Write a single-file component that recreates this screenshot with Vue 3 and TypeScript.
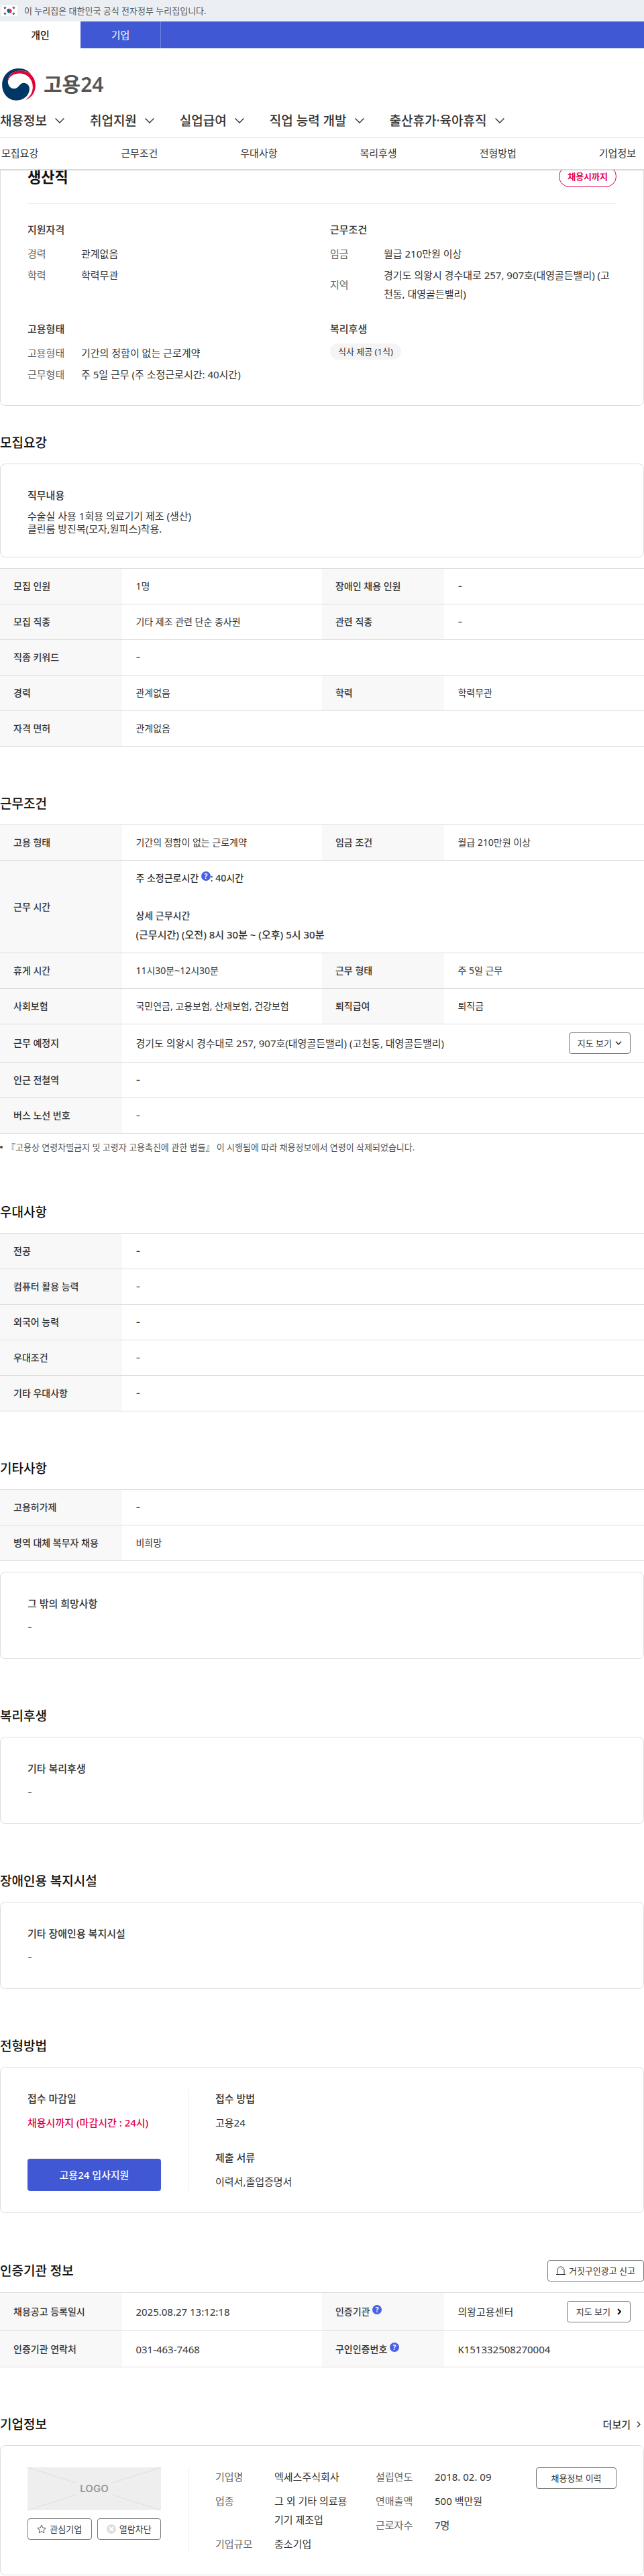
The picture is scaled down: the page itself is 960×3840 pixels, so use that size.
<script setup lang="ts">
interface Cell {
  label: string
  value: string
  help?: boolean
  button?: 'down' | 'right'
}
interface Pair {
  label: string
  value: string
}

const mainMenu: string[] = ['채용정보', '취업지원', '실업급여', '직업 능력 개발', '출산휴가·육아휴직']
const anchors: string[] = ['모집요강', '근무조건', '우대사항', '복리후생', '전형방법', '기업정보']

const qualification: Pair[] = [
  { label: '경력', value: '관계없음' },
  { label: '학력', value: '학력무관' },
]
const condition: Pair[] = [
  { label: '임금', value: '월급 210만원 이상' },
  { label: '지역', value: '경기도 의왕시 경수대로 257, 907호(대영골든밸리) (고천동, 대영골든밸리)' },
]
const employment: Pair[] = [
  { label: '고용형태', value: '기간의 정함이 없는 근로계약' },
  { label: '근무형태', value: '주 5일 근무 (주 소정근로시간: 40시간)' },
]

const recruitRows: Cell[][] = [
  [{ label: '모집 인원', value: '1명' }, { label: '장애인 채용 인원', value: '-' }],
  [{ label: '모집 직종', value: '기타 제조 관련 단순 종사원' }, { label: '관련 직종', value: '-' }],
  [{ label: '직종 키워드', value: '-' }],
  [{ label: '경력', value: '관계없음' }, { label: '학력', value: '학력무관' }],
  [{ label: '자격 면허', value: '관계없음' }],
]
const preferRows: Pair[] = [
  { label: '전공', value: '-' },
  { label: '컴퓨터 활용 능력', value: '-' },
  { label: '외국어 능력', value: '-' },
  { label: '우대조건', value: '-' },
  { label: '기타 우대사항', value: '-' },
]
const otherRows: Pair[] = [
  { label: '고용허가제', value: '-' },
  { label: '병역 대체 복무자 채용', value: '비희망' },
]
const certRows: Cell[][] = [
  [
    { label: '채용공고 등록일시', value: '2025.08.27 13:12:18' },
    { label: '인증기관', value: '의왕고용센터', help: true, button: 'right' },
  ],
  [
    { label: '인증기관 연락처', value: '031-463-7468' },
    { label: '구인인증번호', value: 'K151332508270004', help: true },
  ],
]
const companyLeft: Pair[] = [
  { label: '기업명', value: '엑세스주식회사' },
  { label: '업종', value: '그 외 기타 의료용 기기 제조업' },
  { label: '기업규모', value: '중소기업' },
]
const companyRight: Pair[] = [
  { label: '설립연도', value: '2018. 02. 09' },
  { label: '연매출액', value: '500 백만원' },
  { label: '근로자수', value: '7명' },
]

const isEmpty = (value: string): boolean => value === '-'
</script>

<template>
  <div class="page">
    <header class="header">
      <div class="gov">
        <svg class="flag" viewBox="0 0 24 16" aria-hidden="true">
          <rect width="24" height="16" fill="#fff" />
          <path d="M8.6 6.2a4 4 0 0 1 6.8 3.9A2 2 0 0 1 12 8a2 2 0 0 0-3.4-1.8z" fill="#d6313b" />
          <path d="M8.6 6.2A2 2 0 0 1 12 8a2 2 0 0 0 3.4 2.1 4 4 0 0 1-6.8-3.9z" fill="#1d4f9e" />
          <g stroke="#333" stroke-width="3" stroke-dasharray="1 .4">
            <path d="M4.4 4.8 6.6 2.4M17.4 2.4l2.2 2.4M4.4 11.2l2.2 2.4M17.4 13.6l2.2-2.4" />
          </g>
        </svg>
        <span>이 누리집은 대한민국 공식 전자정부 누리집입니다.</span>
      </div>
      <div class="tabs">
        <a href="#" class="tab on">개인</a>
        <a href="#" class="tab">기업</a>
      </div>
      <a href="#" class="brand">
        <svg class="emblem" viewBox="9 305 150 145" aria-hidden="true">
          <path d="M9 379C9 336 42 305 84 305c24 0 44 10 57 28-14-12-30-18-50-18-33 0-56 20-56 48 0 20 12 33 29 33 20 0 22-25 43-25 15 0 25 12 25 26 0 29-26 52-59 52C36 449 9 418 9 379z" fill="#003764" />
          <path d="M35 367c-1-30 21-52 56-52 39 0 68 28 68 66 0 32-18 56-45 66 21-14 33-35 33-58 0-35-26-61-60-61-28 0-49 15-52 39z" fill="#e60033" />
        </svg>
        <span>고용24</span>
      </a>
      <nav class="menu">
        <button v-for="m in mainMenu" :key="m" type="button">
          {{ m }}
          <svg viewBox="0 0 14 8" aria-hidden="true"><path d="M.6.6 7 7 13.4.6" /></svg>
        </button>
      </nav>
      <nav class="anchors">
        <a v-for="a in anchors" :key="a" href="#">{{ a }}</a>
      </nav>
    </header>

    <main>
      <section class="card summary">
        <div class="summary-head">
          <h1>생산직</h1>
          <span class="due">채용시까지</span>
        </div>
        <div class="summary-grid">
          <div>
            <h3>지원자격</h3>
            <dl class="pairs">
              <div v-for="p in qualification" :key="p.label"><dt>{{ p.label }}</dt><dd>{{ p.value }}</dd></div>
            </dl>
          </div>
          <div>
            <h3>근무조건</h3>
            <dl class="pairs">
              <div v-for="p in condition" :key="p.label"><dt>{{ p.label }}</dt><dd>{{ p.value }}</dd></div>
            </dl>
          </div>
          <div>
            <h3>고용형태</h3>
            <dl class="pairs">
              <div v-for="p in employment" :key="p.label"><dt>{{ p.label }}</dt><dd>{{ p.value }}</dd></div>
            </dl>
          </div>
          <div>
            <h3>복리후생</h3>
            <span class="chip">식사 제공 (1식)</span>
          </div>
        </div>
      </section>

      <section class="block first">
        <div class="head"><h2>모집요강</h2></div>
        <div class="card">
          <h3>직무내용</h3>
          <p class="tight">수술실 사용 1회용 의료기기 제조 (생산)<br>클린룸 방진복(모자,원피스)착용.</p>
        </div>
        <table class="after-card">
          <colgroup><col class="c-th"><col class="c-td"><col class="c-th"><col class="c-td"></colgroup>
          <tbody>
            <tr v-for="(row, i) in recruitRows" :key="i">
              <template v-for="c in row" :key="c.label">
                <th scope="row">{{ c.label }}</th>
                <td :colspan="row.length === 1 ? 3 : 1" :class="{ empty: isEmpty(c.value) }">{{ c.value }}</td>
              </template>
            </tr>
          </tbody>
        </table>
      </section>

      <section class="block">
        <div class="head"><h2>근무조건</h2></div>
        <table>
          <colgroup><col class="c-th"><col class="c-td"><col class="c-th"><col class="c-td"></colgroup>
          <tbody>
            <tr>
              <th scope="row">고용 형태</th><td>기간의 정함이 없는 근로계약</td>
              <th scope="row">임금 조건</th><td>월급 210만원 이상</td>
            </tr>
            <tr>
              <th scope="row">근무 시간</th>
              <td colspan="3" class="hours">
                <p>주 소정근로시간 <button type="button" class="help" aria-label="도움말">?</button>: 40시간</p>
                <p class="gap">상세 근무시간</p>
                <p class="large">(근무시간) (오전) 8시 30분 ~ (오후) 5시 30분</p>
              </td>
            </tr>
            <tr>
              <th scope="row">휴게 시간</th><td>11시30분~12시30분</td>
              <th scope="row">근무 형태</th><td>주 5일 근무</td>
            </tr>
            <tr>
              <th scope="row">사회보험</th><td>국민연금, 고용보험, 산재보험, 건강보험</td>
              <th scope="row">퇴직급여</th><td>퇴직금</td>
            </tr>
            <tr>
              <th scope="row">근무 예정지</th>
              <td colspan="3">
                <div class="split">
                  <span class="large">경기도 의왕시 경수대로 257, 907호(대영골든밸리) (고천동, 대영골든밸리)</span>
                  <button type="button" class="btn">지도 보기<svg class="i-down" viewBox="0 0 10 8" aria-hidden="true"><path d="M1 1.5 5 6l4-4.5" /></svg></button>
                </div>
              </td>
            </tr>
            <tr><th scope="row">인근 전철역</th><td colspan="3" class="empty">-</td></tr>
            <tr><th scope="row">버스 노선 번호</th><td colspan="3" class="empty">-</td></tr>
          </tbody>
        </table>
        <p class="note">『고용상 연령차별금지 및 고령자 고용촉진에 관한 법률』 이 시행됨에 따라 채용정보에서 연령이 삭제되었습니다.</p>
      </section>

      <section class="block">
        <div class="head"><h2>우대사항</h2></div>
        <table>
          <colgroup><col class="c-th"><col></colgroup>
          <tbody>
            <tr v-for="r in preferRows" :key="r.label">
              <th scope="row">{{ r.label }}</th>
              <td :class="{ empty: isEmpty(r.value) }">{{ r.value }}</td>
            </tr>
          </tbody>
        </table>
      </section>

      <section class="block">
        <div class="head"><h2>기타사항</h2></div>
        <table>
          <colgroup><col class="c-th"><col></colgroup>
          <tbody>
            <tr v-for="r in otherRows" :key="r.label">
              <th scope="row">{{ r.label }}</th>
              <td :class="{ empty: isEmpty(r.value) }">{{ r.value }}</td>
            </tr>
          </tbody>
        </table>
        <div class="card after-table">
          <h3>그 밖의 희망사항</h3>
          <p class="empty">-</p>
        </div>
      </section>

      <section class="block">
        <div class="head"><h2>복리후생</h2></div>
        <div class="card">
          <h3>기타 복리후생</h3>
          <p class="empty">-</p>
        </div>
      </section>

      <section class="block">
        <div class="head"><h2>장애인용 복지시설</h2></div>
        <div class="card">
          <h3>기타 장애인용 복지시설</h3>
          <p class="empty">-</p>
        </div>
      </section>

      <section class="block">
        <div class="head"><h2>전형방법</h2></div>
        <div class="card columns">
          <div class="side apply">
            <div>
              <h3>접수 마감일</h3>
              <p class="deadline">채용시까지 (마감시간 : 24시)</p>
            </div>
            <button type="button" class="primary">고용24 입사지원</button>
          </div>
          <div class="method">
            <div>
              <h3>접수 방법</h3>
              <p>고용24</p>
            </div>
            <div>
              <h3>제출 서류</h3>
              <p>이력서,졸업증명서</p>
            </div>
          </div>
        </div>
      </section>

      <section class="block">
        <div class="head">
          <h2>인증기관 정보</h2>
          <button type="button" class="btn">
            <svg class="i-siren" viewBox="0 0 14 14" aria-hidden="true"><path d="M0 12.5h14M2 12V6a5 5 0 0 1 10 0v6M8 3.5l1.8 1.8" /></svg>
            거짓구인광고 신고
          </button>
        </div>
        <table>
          <colgroup><col class="c-th"><col class="c-td"><col class="c-th"><col class="c-td"></colgroup>
          <tbody>
            <tr v-for="(row, i) in certRows" :key="i">
              <template v-for="c in row" :key="c.label">
                <th scope="row">{{ c.label }} <button v-if="c.help" type="button" class="help" aria-label="도움말">?</button></th>
                <td>
                  <div class="split">
                    <span class="large">{{ c.value }}</span>
                    <button v-if="c.button" type="button" class="btn wide">지도 보기<svg class="i-right bold" viewBox="0 0 6 10" aria-hidden="true"><path d="m1 1 4 4-4 4" /></svg></button>
                  </div>
                </td>
              </template>
            </tr>
          </tbody>
        </table>
      </section>

      <section class="block">
        <div class="head">
          <h2>기업정보</h2>
          <a href="#" class="more">더보기<svg class="i-right" viewBox="0 0 6 10" aria-hidden="true"><path d="m1 1 4 4-4 4" /></svg></a>
        </div>
        <div class="card columns">
          <div class="side">
            <div class="logo-box">
              <svg viewBox="0 0 199 64" preserveAspectRatio="none" aria-hidden="true">
                <path d="M0 0 72 23M199 0 127 23M0 64l72-23M199 64l-72-23" />
              </svg>
              <span>LOGO</span>
            </div>
            <div class="logo-buttons">
              <button type="button" class="btn">
                <svg class="i-star" viewBox="0 0 14 14" aria-hidden="true"><path d="m7 1 1.8 4.1 4.5.4-3.4 2.9 1 4.4L7 10.5l-3.9 2.3 1-4.4L.7 5.5l4.5-.4z" /></svg>
                관심기업
              </button>
              <button type="button" class="btn">
                <svg class="i-block" viewBox="0 0 14 14" aria-hidden="true"><circle cx="7" cy="7" r="7" /><path d="m4 4 6 6m0-6-6 6" /></svg>
                열람차단
              </button>
            </div>
          </div>
          <div class="company">
            <dl class="pairs wide-gap">
              <div v-for="p in companyLeft" :key="p.label"><dt>{{ p.label }}</dt><dd>{{ p.value }}</dd></div>
            </dl>
            <dl class="pairs wide-gap">
              <div v-for="p in companyRight" :key="p.label"><dt>{{ p.label }}</dt><dd>{{ p.value }}</dd></div>
            </dl>
            <button type="button" class="btn history">채용정보 이력</button>
          </div>
        </div>
      </section>
    </main>
  </div>
</template>

<style>
body {
  margin: 0;
  background: #fff;
}
</style>

<style scoped>
.page {
  font-family: "Noto Sans", "Noto Sans CJK KR", sans-serif;
  font-size: 15px;
  line-height: 28px;
  color: #333;
}
.page * {
  box-sizing: border-box;
}
h1, h2, h3, p, dl, dd {
  margin: 0;
}
a {
  color: inherit;
  text-decoration: none;
}
button {
  font: inherit;
  color: inherit;
  background: none;
  border: 0;
  padding: 0;
  cursor: pointer;
}
svg {
  display: block;
  flex: none;
  fill: none;
}

.header {
  position: sticky;
  top: 0;
  z-index: 1;
  background: #fff;
  border-bottom: 1px solid #d8d8d8;
  box-shadow: 0 1px 2px rgba(0, 0, 0, 0.15);
}
.gov {
  display: flex;
  align-items: center;
  gap: 10px;
  height: 32px;
  padding-left: 2px;
  background: #ebeff4;
  font-size: 13px;
  color: #555;
}
.flag {
  width: 24px;
  height: 16px;
}
.tabs {
  display: flex;
  height: 40px;
  background: #4058d4;
}
.tab {
  width: 120px;
  line-height: 40px;
  text-align: center;
  color: #fff;
  border-right: 1px solid #6f82e0;
}
.tab.on {
  background: #fff;
  color: #222;
  font-weight: 500;
  border: 0;
}
.brand {
  display: flex;
  align-items: center;
  gap: 12px;
  height: 84px;
  padding: 24px 3px 0;
  font-size: 30px;
  font-weight: 600;
  color: #555;
}
.emblem {
  width: 50px;
  height: 48px;
}
.menu {
  display: flex;
  gap: 38px;
  height: 49px;
  padding-bottom: 1px;
  border-bottom: 1px solid #ddd;
}
.menu button {
  display: flex;
  align-items: center;
  gap: 12px;
  font-size: 19px;
  font-weight: 500;
}
.menu svg {
  width: 14px;
  height: 8px;
  stroke: #333;
  stroke-width: 1.4;
}
.anchors {
  display: flex;
  justify-content: space-between;
  padding: 0 12px 0 2px;
  line-height: 47px;
}

.card {
  padding: 32px 40px;
  border: 1px solid #ddd;
  border-radius: 8px;
}
.card h3 {
  margin-bottom: 8px;
  font-size: 15px;
  font-weight: 500;
}
.tight {
  line-height: 19px;
}
.summary {
  margin-top: -39px;
}
.summary-head {
  display: flex;
  justify-content: space-between;
  align-items: center;
  padding-bottom: 24px;
  border-bottom: 1px solid #eee;
}
h1 {
  font-size: 22px;
  font-weight: 700;
  line-height: 32px;
  color: #111;
}
.due {
  padding: 0 12px;
  border: 1px solid #e4004f;
  border-radius: 16px;
  font-size: 13px;
  font-weight: 700;
  line-height: 30px;
  color: #e4004f;
}
.summary-grid {
  display: grid;
  grid-template-columns: 1fr 1fr;
  gap: 24px;
  padding-top: 24px;
}
.pairs > div {
  display: flex;
  align-items: center;
  margin-bottom: 4px;
}
.pairs > div:last-child {
  margin-bottom: 0;
}
.pairs dt {
  flex: none;
  width: 80px;
  color: #666;
}
.pairs dd {
  word-break: break-all;
}
.chip {
  display: block;
  width: fit-content;
  padding: 0 12px;
  border-radius: 12px;
  background: #f4f4f4;
  font-size: 13px;
  line-height: 24px;
}

.block {
  padding-top: 70px;
}
.block.first {
  padding-top: 40px;
}
.head {
  display: flex;
  justify-content: space-between;
  align-items: center;
  margin-bottom: 16px;
}
h2 {
  font-size: 19px;
  font-weight: 500;
  line-height: 30px;
  color: #111;
}

table {
  width: 100%;
  table-layout: fixed;
  border-collapse: separate;
  border-spacing: 0;
  border-top: 1px solid #ddd;
}
.after-card,
.after-table {
  margin-top: 16px;
}
.c-th {
  width: 19%;
}
.c-td {
  width: 31%;
}
th, td {
  padding: 12px 20px;
  border-bottom: 1px solid #ddd;
  font-size: 14px;
  text-align: left;
}
th {
  background: #f8f8f8;
  font-weight: 500;
}
.empty {
  font-family: Inter, "Noto Sans", sans-serif;
  font-size: 15px;
}
.hours {
  padding-bottom: 13px;
  font-weight: 500;
}
.hours .gap {
  margin-top: 28px;
}
.large {
  font-size: 15px;
}
.split {
  display: flex;
  justify-content: space-between;
  align-items: center;
  min-height: 29px;
}
.help {
  width: 14px;
  height: 14px;
  border-radius: 50%;
  background: #4a62df;
  font-size: 10px;
  font-weight: 700;
  line-height: 14px;
  text-align: center;
  vertical-align: 4px;
  color: #fff;
}
.btn {
  display: flex;
  align-items: center;
  justify-content: center;
  gap: 5px;
  height: 32px;
  padding: 0 12px;
  border: 1px solid #777;
  border-radius: 4px;
  background: #fff;
  font-size: 13px;
  white-space: nowrap;
}
.btn.wide {
  padding: 0 13px;
  gap: 10px;
}
.i-down {
  width: 10px;
  height: 8px;
  stroke: #333;
  stroke-width: 1.4;
}
.i-right {
  width: 6px;
  height: 10px;
  stroke: #333;
  stroke-width: 1.4;
}
.i-right.bold {
  stroke: #111;
  stroke-width: 2;
}
.i-siren,
.i-star,
.i-block {
  width: 14px;
  height: 14px;
  stroke: #333;
}
.i-star {
  stroke: #555;
}
.i-block {
  fill: #ddd;
  stroke: none;
}
.i-block path {
  stroke: #fff;
  stroke-width: 2;
}
.note {
  display: flex;
  align-items: center;
  gap: 6px;
  margin-top: 8px;
  font-size: 13px;
  line-height: 24px;
  color: #555;
}
.note::before {
  content: "";
  width: 4px;
  height: 4px;
  border-radius: 50%;
  background: #444;
}

.columns {
  display: flex;
}
.side {
  flex: none;
  width: 240px;
  padding-right: 40px;
  border-right: 1px solid #eee;
}
.apply {
  display: flex;
  flex-direction: column;
  justify-content: space-between;
}
.deadline {
  font-weight: 500;
  color: #e4004f;
}
.primary {
  height: 48px;
  border-radius: 4px;
  background: #4058d4;
  font-weight: 500;
  color: #fff;
}
.method {
  display: grid;
  gap: 24px;
  padding-left: 40px;
}
.more {
  display: flex;
  align-items: center;
  gap: 9px;
  padding-right: 5px;
  font-weight: 500;
}
.logo-box {
  display: grid;
  place-items: center;
  height: 64px;
  background: #eee;
  font-family: Inter, sans-serif;
  font-weight: 600;
  color: #999;
}
.logo-box > * {
  grid-area: 1 / 1;
}
.logo-box svg {
  width: 100%;
  height: 64px;
  stroke: #ddd;
}
.logo-buttons {
  display: grid;
  grid-template-columns: 1fr 1fr;
  gap: 8px;
  margin-top: 12px;
}
.company {
  display: flex;
  flex: 1;
  align-items: flex-start;
  padding-left: 40px;
}
.company .pairs {
  flex: 1;
  padding-right: 32px;
}
.wide-gap > div {
  align-items: flex-start;
  margin-bottom: 8px;
}
.wide-gap dt {
  width: 88px;
}
.wide-gap dd {
  word-break: keep-all;
}
.btn.history {
  width: 120px;
}
</style>
